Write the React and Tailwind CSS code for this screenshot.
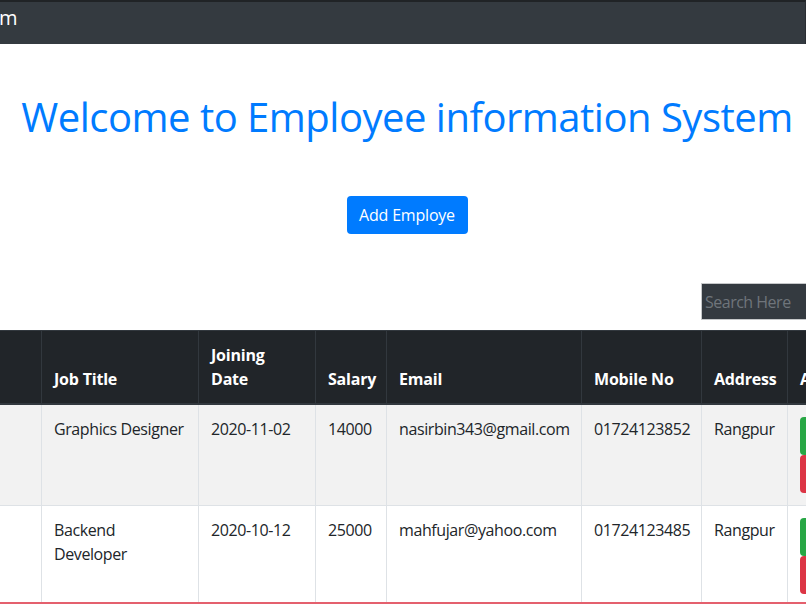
import React from "react";

const cols = "grid grid-cols-[41px_157px_117px_71px_195px_120px_86px_200px]";

function HeadCell({ children, first }) {
  return (
    <div
      className={`flex flex-col justify-end px-3 pt-3 pb-3 font-bold text-white leading-6 whitespace-nowrap tracking-[-0.2px] ${
        first ? "" : "border-l border-[#32383e]"
      }`}
    >
      {children}
    </div>
  );
}

function Cell({ children, first }) {
  return (
    <div
      className={`px-3 py-3 leading-6 text-[#212529] whitespace-nowrap tracking-[-0.4px] ${
        first ? "" : "border-l border-[#dee2e6]"
      }`}
    >
      {children}
    </div>
  );
}

function Row({ striped, job, date, salary, email, mobile, address }) {
  return (
    <div className={`${cols} border-b border-[#dee2e6] ${striped ? "bg-[#f2f2f2]" : "bg-white"}`}>
      <Cell first />
      <Cell>{job}</Cell>
      <Cell>{date}</Cell>
      <Cell>{salary}</Cell>
      <Cell>{email}</Cell>
      <Cell>{mobile}</Cell>
      <Cell>{address}</Cell>
      <div className="border-l border-[#dee2e6] px-3 py-3 flex flex-col">
        <button className="h-[38px] w-[60px] rounded-[4px] bg-[#28a745] text-white text-left pl-[40px]">Edit</button>
        <button className="h-[38px] w-[70px] rounded-[4px] bg-[#dc3545] text-white text-left pl-[40px]">Delete</button>
      </div>
    </div>
  );
}

export default function App() {
  return (
    <div className="relative w-[806px] h-[604px] overflow-hidden bg-white font-['Open_Sans',sans-serif] text-[16px]">
      <nav className="h-[44px] bg-[#343a40] border-t-2 border-[#202326] border-r border-r-[#2a2e33] pt-[6px]">
        <span className="block text-white text-[20px] leading-[20px] -ml-[1px]">m</span>
      </nav>
      <div className="w-[814px]">
        <h1 className="mt-[49px] text-center text-[40px] leading-[48px] font-medium tracking-[-0.5px] text-[#007bff] whitespace-nowrap">
          Welcome to Employee information System
        </h1>
        <div className="flex justify-center mt-[55px]">
          <button className="h-[38px] w-[121px] rounded-[4px] bg-[#007bff] text-white text-[16px] leading-6 tracking-[-0.2px]">
            Add Employe
          </button>
        </div>
        <div className="flex mt-[49px] pl-[701px]">
          <input
            className="h-[37px] w-[200px] shrink-0 bg-[#343a40] border border-[#c6c8ca] pl-[3px] text-[16px] tracking-[-0.5px] text-white placeholder:text-[#6f757b] outline-none"
            placeholder="Search Here"
          />
        </div>
        <div className="mt-[10px] w-[987px]">
          <div className={`${cols} bg-[#212529] border-t border-[#32383e] border-b-2 border-b-[#32383e]`}>
            <HeadCell first />
            <HeadCell>Job Title</HeadCell>
            <HeadCell>
              <span>Joining</span>
              <span>Date</span>
            </HeadCell>
            <HeadCell>Salary</HeadCell>
            <HeadCell>Email</HeadCell>
            <HeadCell>Mobile No</HeadCell>
            <HeadCell>Address</HeadCell>
            <HeadCell>Action</HeadCell>
          </div>
          <Row
            striped
            job="Graphics Designer"
            date="2020-11-02"
            salary="14000"
            email="nasirbin343@gmail.com"
            mobile="01724123852"
            address="Rangpur"
          />
          <Row
            job={
              <>
                Backend
                <br />
                Developer
              </>
            }
            date="2020-10-12"
            salary="25000"
            email="mahfujar@yahoo.com"
            mobile="01724123485"
            address="Rangpur"
          />
        </div>
      </div>
      <div className="absolute left-0 right-0 bottom-0 h-[2px] bg-[#e4606d]" />
    </div>
  );
}
